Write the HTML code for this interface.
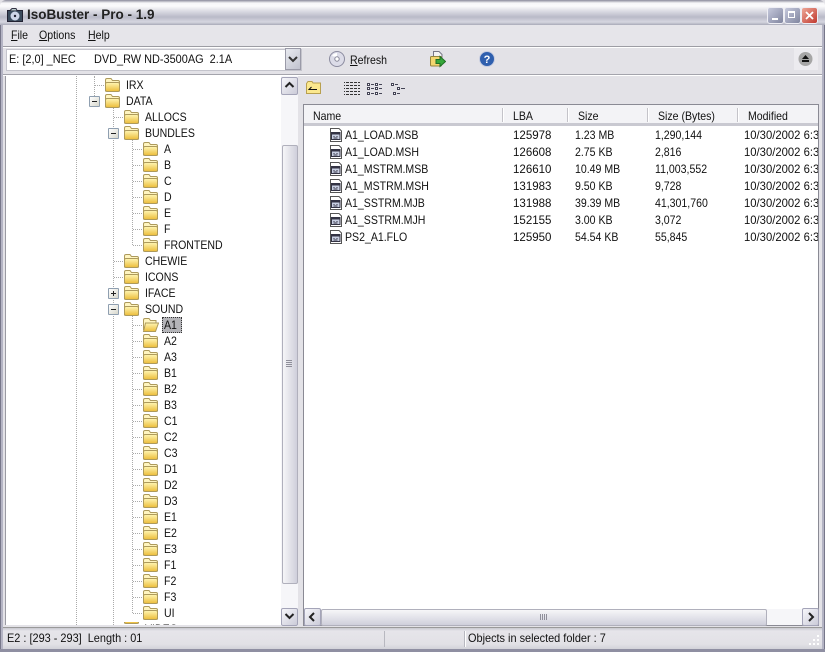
<!DOCTYPE html>
<html><head><meta charset="utf-8"><title>IsoBuster</title>
<style>
html,body{margin:0;padding:0;width:825px;height:652px;overflow:hidden;background:#fff}
body,div,span{font-family:"Liberation Sans",sans-serif;font-size:12px;color:#111}
.a,.t,.f,.x,.l,.btn{position:absolute}
.t{white-space:pre;line-height:14px;transform:scaleX(.88);transform-origin:0 50%}
.n{transform:scaleX(.96)}
.s{transform:scaleX(.91)}
.d{transform:scaleX(.94)}
u{text-decoration:underline}
.f{width:17px;height:15px}
.l{width:14px;height:14px}
.x{width:9px;height:9px;border:1px solid #8f9fb0;background:linear-gradient(135deg,#fff,#d8d8cc);border-radius:1px}
.x:before{content:"";position:absolute;left:2px;top:4px;width:5px;height:1px;background:#222}
.x.p:after{content:"";position:absolute;left:4px;top:2px;width:1px;height:5px;background:#222}
.v{position:absolute;width:0;border-left:1px dotted #aaa}
.h{position:absolute;height:0;border-top:1px dotted #aaa}
.btn{width:15px;height:16px;border:1px solid #a4a4b8;border-radius:2px;background:linear-gradient(135deg,#f6f6fa,#cbcbd8)}
.btn svg{position:absolute;left:2px;top:3px}
.sep{position:absolute;width:1px;top:108px;height:14px;background:#c4c3c9;border-right:1px solid #fff}
.wb{position:absolute;top:7px;width:15px;height:15px;border:1px solid #eeeef4;border-radius:3px;background:linear-gradient(135deg,#c6c9dc,#80859f)}
</style></head><body>
<svg width="0" height="0" style="position:absolute">
<defs>
<linearGradient id="g" x1="0" y1="0" x2="0" y2="1"><stop offset="0" stop-color="#fff6b4"/><stop offset="1" stop-color="#ecbc38"/></linearGradient>
<symbol id="fo" viewBox="0 1 17 15"><path d="M1.500 14V3q0-1.500 1.500-1.500h4l1.500 2H14q1.500 0 1.500 1.500V14Z" fill="#fff5c0" stroke="#ad9a5c"/><rect x="1.500" y="5.500" width="14" height="9" rx="1.500" fill="url(#g)" stroke="#ad9a5c"/></symbol>
<symbol id="op" viewBox="0 1 17 15"><path d="M1.500 13V3q0-1.500 1.500-1.500h4l1.500 2H14V7" fill="#fff5c0" stroke="#ad9a5c"/><path d="M1.500 14.500L3.500 6H16.500L13.500 14.500Z" fill="url(#g)" stroke="#ad9a5c"/></symbol>
<symbol id="fi" viewBox="0 0 14 14"><path d="M1.500.5H10L12.500 3V13.500H1.500Z" fill="#fff" stroke="#555"/><rect x="2.500" y="4.500" width="8.500" height="7" fill="#c8cfe2" stroke="#334"/><rect x="3" y="5" width="7.500" height="1.500" fill="#334"/><path d="M4.500 8.500h1M7.500 8.500h1M4.500 10h4" stroke="#334"/></symbol>
</defs></svg>

<!-- window frame -->
<div class="a" style="left:0;top:0;width:825px;height:652px;background:#e3e2e7"></div>
<div class="a" style="left:0;top:0;width:825px;height:25px;border-radius:6px 6px 0 0;background:linear-gradient(#8a8a9a 0,#f6f6f8 3px,#fbfbfc 6px,#dcdce4 11px,#b9bac8 17px,#d6d6e0 22px,#a8a9b8 25px)"></div>
<div class="a" style="left:0;top:25px;width:3px;height:627px;background:#b4b4c4;border-left:1px solid #77778a;box-sizing:border-box"></div>
<div class="a" style="left:822px;top:25px;width:3px;height:627px;background:#b4b4c4;border-right:1px solid #77778a;box-sizing:border-box"></div>
<div class="a" style="left:0;top:649px;width:825px;height:3px;background:#8f8fa2"></div>

<!-- title -->
<svg class="a" style="left:7px;top:8px" width="16" height="15" viewBox="0 0 16 15"><rect x=".5" y="2.500" width="15" height="11" fill="#3a4a5c" stroke="#223"/><path d="M3 2.500L5 .5h4l1 2" fill="#bcc" stroke="#334"/><circle cx="8" cy="8" r="4.500" fill="#cfd6e8"/><circle cx="8" cy="8" r="1.200" fill="#223"/></svg>
<div class="t" style="left:27px;top:8px;font-size:13.500px;font-weight:bold;color:#222;transform:none">IsoBuster - Pro - 1.9</div>
<div class="wb" style="left:767px"><div class="a" style="left:4px;top:10px;width:6px;height:2px;background:#fff"></div></div>
<div class="wb" style="left:784px"><div class="a" style="left:3px;top:3px;width:7px;height:7px;border:1px solid #fff;border-top-width:2px;box-sizing:border-box"></div></div>
<div class="wb" style="left:801px;background:linear-gradient(135deg,#eea898,#c0392f)"><svg class="a" style="left:3px;top:3px" width="9" height="9" viewBox="0 0 9 9"><path d="M1 1L8 8M8 1L1 8" stroke="#fff" stroke-width="1.800"/></svg></div>

<!-- menu -->
<div class="a" style="left:3px;top:25px;width:819px;height:21px;background:#e6e5ea"></div>
<div class="t" style="left:11px;top:28px"><u>F</u>ile</div>
<div class="t" style="left:39px;top:28px"><u>O</u>ptions</div>
<div class="t" style="left:88px;top:28px"><u>H</u>elp</div>
<div class="a" style="left:3px;top:46px;width:819px;height:1px;background:#9d9da4"></div>
<div class="a" style="left:3px;top:47px;width:819px;height:1px;background:#fff"></div>

<!-- toolbar -->
<div class="a" style="left:6px;top:49px;width:294px;height:20px;background:#fff;border:1px solid #c4c4cc"></div>
<div class="t s" style="left:9px;top:52px">E: [2,0] _NEC      DVD_RW ND-3500AG  2.1A</div>
<div class="a" style="left:285px;top:48px;width:16px;height:22px;background:linear-gradient(135deg,#e8eaf0,#c0c2ce);border:1px solid #9a9aa8;box-sizing:border-box"><svg class="a" style="left:2px;top:7px" width="10" height="7" viewBox="0 0 10 7"><path d="M1 1L5 5L9 1" fill="none" stroke="#333" stroke-width="2"/></svg></div>
<svg class="a" style="left:329px;top:51px" width="16" height="16" viewBox="0 0 16 16"><circle cx="8" cy="8" r="7.500" fill="#dcdce8" stroke="#8c8ca0"/><path d="M3 5A6 6 0 0 1 8 2V6Z" fill="#fff"/><circle cx="8" cy="8" r="2.200" fill="#fff" stroke="#889"/></svg>
<div class="t" style="left:350px;top:53px"><u>R</u>efresh</div>
<svg class="a" style="left:430px;top:51px" width="16" height="17" viewBox="0 0 16 17"><path d="M3.500.5H9l3 3V8H3.500Z" fill="#f3f3f3" stroke="#778"/><rect x=".5" y="5.500" width="11" height="9.500" rx="1" fill="#f2d66f" stroke="#94843f"/><path d="M6 8.500H10V5.500L15.500 10.500L10 15.500V12.500H6Z" fill="#36a83a" stroke="#1f6f25"/></svg>
<svg class="a" style="left:479px;top:51px" width="16" height="16" viewBox="0 0 16 16"><circle cx="8" cy="8" r="7.500" fill="#2f5fae" stroke="#c6cce0"/><text x="8" y="12" text-anchor="middle" font-family="Liberation Sans" font-weight="bold" font-size="11" fill="#fff">?</text></svg>
<div class="a" style="left:794px;top:48px;width:24px;height:22px;background:#ecebef"></div>
<svg class="a" style="left:798px;top:51px" width="15" height="16" viewBox="0 0 15 16"><circle cx="7.500" cy="8" r="7" fill="#a6a6a6"/><path d="M7.500 4L11 8H4Z" fill="#111"/><rect x="4" y="9" width="7" height="2" fill="#111"/></svg>
<div class="a" style="left:3px;top:74px;width:819px;height:1px;background:#a4a4ac"></div>
<div class="a" style="left:3px;top:75px;width:819px;height:1px;background:#fff"></div>

<!-- tree pane -->
<div class="a" style="left:5px;top:76px;width:276px;height:549px;background:#fff;border-left:1px solid #9a9aa2;overflow:hidden">
<div style="position:absolute;left:-6px;top:-76px;width:280px;height:625px">
<div class="v" style="left:76px;top:76px;height:549px"></div>
<div class="v" style="left:94px;top:76px;height:20px"></div>
<div class="v" style="left:113px;top:108px;height:517px"></div>
<div class="v" style="left:132px;top:140px;height:105px"></div>
<div class="v" style="left:132px;top:316px;height:297px"></div>
<div class="h" style="left:95px;top:85px;width:9px"></div>
<div class="h" style="left:114px;top:117px;width:9px"></div>
<div class="h" style="left:114px;top:261px;width:9px"></div>
<div class="h" style="left:114px;top:277px;width:9px"></div>
<div class="h" style="left:133px;top:149px;width:9px"></div><div class="h" style="left:133px;top:165px;width:9px"></div><div class="h" style="left:133px;top:181px;width:9px"></div><div class="h" style="left:133px;top:197px;width:9px"></div><div class="h" style="left:133px;top:213px;width:9px"></div><div class="h" style="left:133px;top:229px;width:9px"></div><div class="h" style="left:133px;top:245px;width:9px"></div>
<div class="h" style="left:133px;top:325px;width:9px"></div><div class="h" style="left:133px;top:341px;width:9px"></div><div class="h" style="left:133px;top:357px;width:9px"></div><div class="h" style="left:133px;top:373px;width:9px"></div><div class="h" style="left:133px;top:389px;width:9px"></div><div class="h" style="left:133px;top:405px;width:9px"></div><div class="h" style="left:133px;top:421px;width:9px"></div><div class="h" style="left:133px;top:437px;width:9px"></div><div class="h" style="left:133px;top:453px;width:9px"></div><div class="h" style="left:133px;top:469px;width:9px"></div><div class="h" style="left:133px;top:485px;width:9px"></div><div class="h" style="left:133px;top:501px;width:9px"></div><div class="h" style="left:133px;top:517px;width:9px"></div><div class="h" style="left:133px;top:533px;width:9px"></div><div class="h" style="left:133px;top:549px;width:9px"></div><div class="h" style="left:133px;top:565px;width:9px"></div><div class="h" style="left:133px;top:581px;width:9px"></div><div class="h" style="left:133px;top:597px;width:9px"></div><div class="h" style="left:133px;top:613px;width:9px"></div>
<div class="x" style="left:89px;top:96px"></div>
<div class="x" style="left:108px;top:128px"></div>
<div class="x p" style="left:108px;top:288px"></div>
<div class="x" style="left:108px;top:304px"></div>

<svg class="f" style="left:104px;top:78px"><use href="#fo"/></svg><div class="t" style="left:126px;top:78px">IRX</div>
<svg class="f" style="left:104px;top:94px"><use href="#fo"/></svg><div class="t" style="left:126px;top:94px">DATA</div>
<svg class="f" style="left:123px;top:110px"><use href="#fo"/></svg><div class="t" style="left:145px;top:110px">ALLOCS</div>
<svg class="f" style="left:123px;top:126px"><use href="#fo"/></svg><div class="t" style="left:145px;top:126px">BUNDLES</div>
<svg class="f" style="left:142px;top:142px"><use href="#fo"/></svg><div class="t" style="left:164px;top:142px">A</div>
<svg class="f" style="left:142px;top:158px"><use href="#fo"/></svg><div class="t" style="left:164px;top:158px">B</div>
<svg class="f" style="left:142px;top:174px"><use href="#fo"/></svg><div class="t" style="left:164px;top:174px">C</div>
<svg class="f" style="left:142px;top:190px"><use href="#fo"/></svg><div class="t" style="left:164px;top:190px">D</div>
<svg class="f" style="left:142px;top:206px"><use href="#fo"/></svg><div class="t" style="left:164px;top:206px">E</div>
<svg class="f" style="left:142px;top:222px"><use href="#fo"/></svg><div class="t" style="left:164px;top:222px">F</div>
<svg class="f" style="left:142px;top:238px"><use href="#fo"/></svg><div class="t" style="left:164px;top:238px">FRONTEND</div>
<svg class="f" style="left:123px;top:254px"><use href="#fo"/></svg><div class="t" style="left:145px;top:254px">CHEWIE</div>
<svg class="f" style="left:123px;top:270px"><use href="#fo"/></svg><div class="t" style="left:145px;top:270px">ICONS</div>
<svg class="f" style="left:123px;top:286px"><use href="#fo"/></svg><div class="t" style="left:145px;top:286px">IFACE</div>
<svg class="f" style="left:123px;top:302px"><use href="#fo"/></svg><div class="t" style="left:145px;top:302px">SOUND</div>
<svg class="f" style="left:142px;top:318px"><use href="#op"/></svg>
<div class="a" style="left:162px;top:317px;width:20px;height:16px;background:#b4b4b8;border:1px dotted #333;box-sizing:border-box"></div>
<div class="t" style="left:164px;top:318px">A1</div>
<svg class="f" style="left:142px;top:334px"><use href="#fo"/></svg><div class="t" style="left:164px;top:334px">A2</div>
<svg class="f" style="left:142px;top:350px"><use href="#fo"/></svg><div class="t" style="left:164px;top:350px">A3</div>
<svg class="f" style="left:142px;top:366px"><use href="#fo"/></svg><div class="t" style="left:164px;top:366px">B1</div>
<svg class="f" style="left:142px;top:382px"><use href="#fo"/></svg><div class="t" style="left:164px;top:382px">B2</div>
<svg class="f" style="left:142px;top:398px"><use href="#fo"/></svg><div class="t" style="left:164px;top:398px">B3</div>
<svg class="f" style="left:142px;top:414px"><use href="#fo"/></svg><div class="t" style="left:164px;top:414px">C1</div>
<svg class="f" style="left:142px;top:430px"><use href="#fo"/></svg><div class="t" style="left:164px;top:430px">C2</div>
<svg class="f" style="left:142px;top:446px"><use href="#fo"/></svg><div class="t" style="left:164px;top:446px">C3</div>
<svg class="f" style="left:142px;top:462px"><use href="#fo"/></svg><div class="t" style="left:164px;top:462px">D1</div>
<svg class="f" style="left:142px;top:478px"><use href="#fo"/></svg><div class="t" style="left:164px;top:478px">D2</div>
<svg class="f" style="left:142px;top:494px"><use href="#fo"/></svg><div class="t" style="left:164px;top:494px">D3</div>
<svg class="f" style="left:142px;top:510px"><use href="#fo"/></svg><div class="t" style="left:164px;top:510px">E1</div>
<svg class="f" style="left:142px;top:526px"><use href="#fo"/></svg><div class="t" style="left:164px;top:526px">E2</div>
<svg class="f" style="left:142px;top:542px"><use href="#fo"/></svg><div class="t" style="left:164px;top:542px">E3</div>
<svg class="f" style="left:142px;top:558px"><use href="#fo"/></svg><div class="t" style="left:164px;top:558px">F1</div>
<svg class="f" style="left:142px;top:574px"><use href="#fo"/></svg><div class="t" style="left:164px;top:574px">F2</div>
<svg class="f" style="left:142px;top:590px"><use href="#fo"/></svg><div class="t" style="left:164px;top:590px">F3</div>
<svg class="f" style="left:142px;top:606px"><use href="#fo"/></svg><div class="t" style="left:164px;top:606px">UI</div>
<svg class="f" style="left:123px;top:610px;clip-path:inset(12px 0 0 0)"><use href="#fo"/></svg><div class="t" style="left:145px;top:611px;height:14px;overflow:hidden"><span style="position:relative;top:11px">VIDEO</span></div>
</div></div>

<!-- tree scrollbar -->
<div class="a" style="left:281px;top:76px;width:17px;height:550px;background:#f6f6f9"></div>
<div class="btn" style="left:281px;top:77px"><svg width="11" height="9" viewBox="0 0 11 9"><path d="M1.500 6L5.500 2L9.500 6" fill="none" stroke="#222" stroke-width="2"/></svg></div>
<div class="a" style="left:282px;top:145px;width:14px;height:437px;border:1px solid #b0b0bc;border-radius:2px;background:linear-gradient(90deg,#f6f6f8,#cfcfdb)"></div>
<div class="a" style="left:286px;top:360px;width:6px;height:7px;background:repeating-linear-gradient(#8f8f9a 0 1px,transparent 1px 2px)"></div>
<div class="btn" style="left:281px;top:608px"><svg width="11" height="9" viewBox="0 0 11 9"><path d="M1.500 2L5.500 6L9.500 2" fill="none" stroke="#222" stroke-width="2"/></svg></div>

<!-- right toolbar icons -->
<svg class="a" style="left:306px;top:81px" width="16" height="14" viewBox="0 0 16 14"><path d="M.5 2.500L2 .5H6L7 2H14.500V12.500H.5Z" fill="#fbe88e" stroke="#b8a050"/><path d="M3 8.500H11M5.500 6L3 8.500H6" stroke="#111" fill="none"/></svg>
<svg class="a" style="left:344px;top:82px" width="16" height="14" viewBox="0 0 16 14"><path d="M0 .5H16M0 3.500H16M0 6.500H16M0 9.500H16M0 12.500H16" stroke="#333"/><path d="M1.500 0V14M5.500 0V14M9.500 0V14M13.500 0V14" stroke="#e3e2e7"/></svg>
<svg class="a" style="left:367px;top:82px" width="15" height="14" viewBox="0 0 15 14"><path d="M.5 1.500h2v2h-2zM.5 5.500h2v2h-2zM.5 10.500h2v2h-2zM8.500 1.500h2v2h-2zM8.500 5.500h2v2h-2zM8.500 10.500h2v2h-2z" fill="#fff" stroke="#445"/><path d="M4 2.500h3M4 6.500h3M4 11.500h3M12 2.500h3M12 6.500h3M12 11.500h3" stroke="#445"/></svg>
<svg class="a" style="left:391px;top:82px" width="15" height="14" viewBox="0 0 15 14"><path d="M.5 1.500h2v2h-2zM6.500 5.500h2v2h-2zM2.500 10.500h2v2h-2z" fill="#fff" stroke="#445"/><path d="M4 2.500h3M10 6.500h4M6 11.500h3" stroke="#445"/></svg>

<!-- list -->
<div class="a" style="left:303px;top:104px;width:516px;height:522px;background:#fff;border:1px solid #8a8a94;box-sizing:border-box"></div>
<div class="a" style="left:304px;top:105px;width:514px;height:21px;background:#f3f3f6;border-bottom:3px solid #c9c9d1;box-sizing:border-box"></div>
<div class="sep" style="left:502px"></div><div class="sep" style="left:567px"></div><div class="sep" style="left:647px"></div><div class="sep" style="left:737px"></div>
<div class="t" style="left:313px;top:109px">Name</div><div class="t" style="left:513px;top:109px">LBA</div><div class="t" style="left:578px;top:109px">Size</div><div class="t" style="left:658px;top:109px">Size (Bytes)</div><div class="t" style="left:748px;top:109px">Modified</div>

<div class="a" style="left:304px;top:126px;width:514px;height:120px;overflow:hidden"><div style="position:absolute;left:-304px;top:-126px;width:825px;height:300px">
<svg class="l" style="left:329px;top:128px"><use href="#fi"/></svg><div class="t" style="left:345px;top:128px">A1_LOAD.MSB</div><div class="t n" style="left:513px;top:128px">125978</div><div class="t" style="left:575px;top:128px">1.23 MB</div><div class="t" style="left:655px;top:128px">1,290,144</div><div class="t d" style="left:744px;top:128px">10/30/2002 6:30</div>
<svg class="l" style="left:329px;top:145px"><use href="#fi"/></svg><div class="t" style="left:345px;top:145px">A1_LOAD.MSH</div><div class="t n" style="left:513px;top:145px">126608</div><div class="t" style="left:575px;top:145px">2.75 KB</div><div class="t" style="left:655px;top:145px">2,816</div><div class="t d" style="left:744px;top:145px">10/30/2002 6:30</div>
<svg class="l" style="left:329px;top:162px"><use href="#fi"/></svg><div class="t" style="left:345px;top:162px">A1_MSTRM.MSB</div><div class="t n" style="left:513px;top:162px">126610</div><div class="t" style="left:575px;top:162px">10.49 MB</div><div class="t" style="left:655px;top:162px">11,003,552</div><div class="t d" style="left:744px;top:162px">10/30/2002 6:30</div>
<svg class="l" style="left:329px;top:179px"><use href="#fi"/></svg><div class="t" style="left:345px;top:179px">A1_MSTRM.MSH</div><div class="t n" style="left:513px;top:179px">131983</div><div class="t" style="left:575px;top:179px">9.50 KB</div><div class="t" style="left:655px;top:179px">9,728</div><div class="t d" style="left:744px;top:179px">10/30/2002 6:30</div>
<svg class="l" style="left:329px;top:196px"><use href="#fi"/></svg><div class="t" style="left:345px;top:196px">A1_SSTRM.MJB</div><div class="t n" style="left:513px;top:196px">131988</div><div class="t" style="left:575px;top:196px">39.39 MB</div><div class="t" style="left:655px;top:196px">41,301,760</div><div class="t d" style="left:744px;top:196px">10/30/2002 6:30</div>
<svg class="l" style="left:329px;top:213px"><use href="#fi"/></svg><div class="t" style="left:345px;top:213px">A1_SSTRM.MJH</div><div class="t n" style="left:513px;top:213px">152155</div><div class="t" style="left:575px;top:213px">3.00 KB</div><div class="t" style="left:655px;top:213px">3,072</div><div class="t d" style="left:744px;top:213px">10/30/2002 6:30</div>
<svg class="l" style="left:329px;top:230px"><use href="#fi"/></svg><div class="t" style="left:345px;top:230px">PS2_A1.FLO</div><div class="t n" style="left:513px;top:230px">125950</div><div class="t" style="left:575px;top:230px">54.54 KB</div><div class="t" style="left:655px;top:230px">55,845</div><div class="t d" style="left:744px;top:230px">10/30/2002 6:30</div>
</div></div>

<!-- horizontal scrollbar -->
<div class="a" style="left:304px;top:609px;width:514px;height:16px;background:#f6f6f9"></div>
<div class="btn" style="left:304px;top:608px"><svg width="11" height="10" viewBox="0 0 11 10"><path d="M7 1L3 5L7 9" fill="none" stroke="#222" stroke-width="2"/></svg></div>
<div class="a" style="left:321px;top:609px;width:444px;height:15px;border:1px solid #b0b0bc;border-radius:2px;background:linear-gradient(#f6f6f8,#cfcfdb)"></div>
<div class="a" style="left:540px;top:614px;width:7px;height:6px;background:repeating-linear-gradient(90deg,#8f8f9a 0 1px,transparent 1px 2px)"></div>
<div class="btn" style="left:802px;top:608px"><svg width="11" height="10" viewBox="0 0 11 10"><path d="M4 1L8 5L4 9" fill="none" stroke="#222" stroke-width="2"/></svg></div>

<!-- status bar -->
<div class="a" style="left:3px;top:627px;width:819px;height:22px;background:linear-gradient(#c8c8d0 0,#e6e5ea 3px,#e2e1e6 16px,#cfcfd6 22px);border-top:1px solid #999;box-sizing:border-box"></div>
<div class="a" style="left:384px;top:631px;width:1px;height:16px;background:#b8b8c0"></div>
<div class="a" style="left:464px;top:631px;width:1px;height:16px;background:#fff;border-left:1px solid #b8b8c0"></div>
<div class="t s" style="left:7px;top:631px">E2 : [293 - 293]  Length : 01</div>
<div class="t s" style="left:468px;top:631px">Objects in selected folder : 7</div>
<svg class="a" style="left:808px;top:634px" width="12" height="12" viewBox="0 0 12 12"><path d="M9 1h2v2H9zM5 5h2v2H5zM9 5h2v2H9zM1 9h2v2H1zM5 9h2v2H5zM9 9h2v2H9z" fill="#fff"/></svg>
</body></html>
